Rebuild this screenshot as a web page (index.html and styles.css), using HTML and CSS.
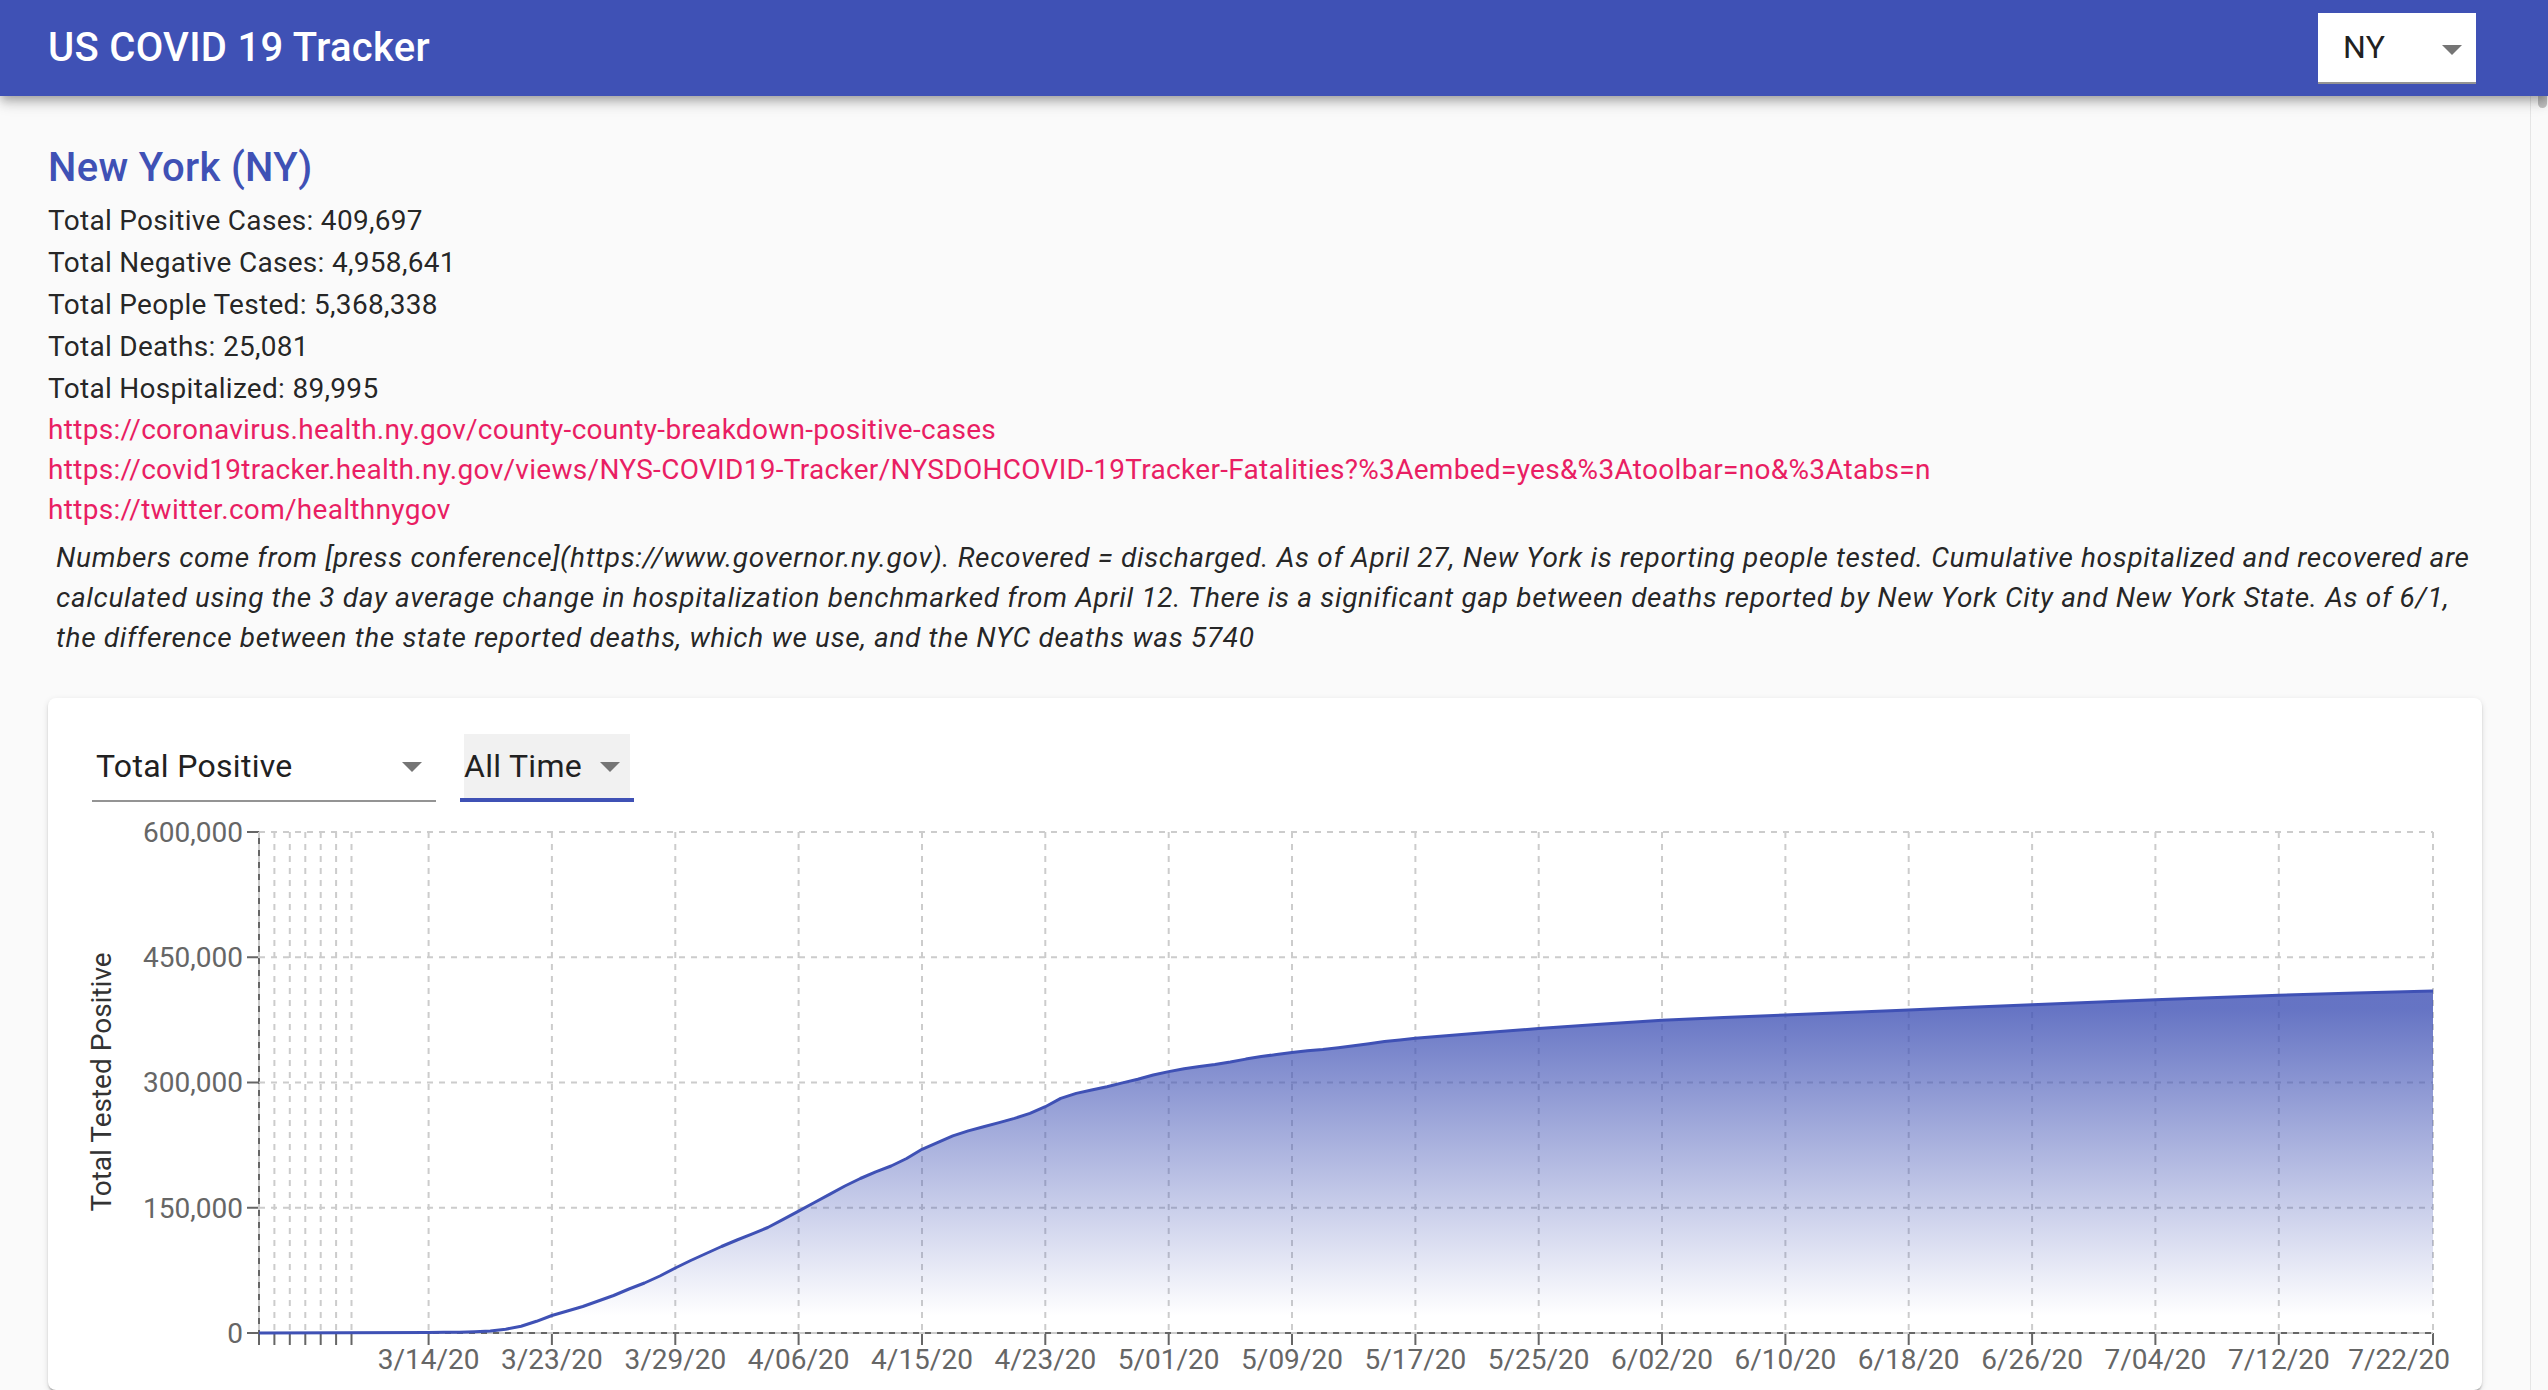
FILE: index.html
```html
<!DOCTYPE html>
<html lang="en">
<head>
<meta charset="utf-8">
<title>US COVID 19 Tracker</title>
<link rel="stylesheet" href="styles.css">
</head>
<body>
<div class="app">
  <header class="appbar">
    <h1 class="app-title">US COVID 19 Tracker</h1>
    <div class="state-select">
      <span class="state-value">NY</span>
      <svg class="drop-arrow" viewBox="0 0 20 10"><path d="M0 0h20L10 10z"/></svg>
    </div>
  </header>
  <div class="viewport">
    <main class="content">
      <h2 class="state-name">New York (NY)</h2>
      <div class="stats">
        <p class="stat">Total Positive Cases: 409,697</p>
        <p class="stat">Total Negative Cases: 4,958,641</p>
        <p class="stat">Total People Tested: 5,368,338</p>
        <p class="stat">Total Deaths: 25,081</p>
        <p class="stat">Total Hospitalized: 89,995</p>
      </div>
      <div class="links">
        <a class="source-link" href="#">https://coronavirus.health.ny.gov/county-county-breakdown-positive-cases</a>
        <a class="source-link" href="#">https://covid19tracker.health.ny.gov/views/NYS-COVID19-Tracker/NYSDOHCOVID-19Tracker-Fatalities?%3Aembed=yes&amp;%3Atoolbar=no&amp;%3Atabs=n</a>
        <a class="source-link" href="#">https://twitter.com/healthnygov</a>
      </div>
      <p class="notes">Numbers come from [press conference](https://www.governor.ny.gov). Recovered = discharged. As of April 27, New York is reporting people tested. Cumulative hospitalized and recovered are calculated using the 3 day average change in hospitalization benchmarked from April 12. There is a significant gap between deaths reported by New York City and New York State. As of 6/1, the difference between the state reported deaths, which we use, and the NYC deaths was 5740</p>

      <section class="chart-card">
        <div class="chart-controls">
          <div class="select select-metric">
            <div class="select-field"><span>Total Positive</span></div>
            <svg class="drop-arrow" viewBox="0 0 20 10"><path d="M0 0h20L10 10z"/></svg>
          </div>
          <div class="select select-range is-focused">
            <div class="select-field"><span>All Time</span></div>
            <svg class="drop-arrow" viewBox="0 0 20 10"><path d="M0 0h20L10 10z"/></svg>
          </div>
        </div>

        <svg class="chart" width="2434" height="580" viewBox="48 810 2434 580">
          <defs>
            <linearGradient id="areaFill" x1="0" y1="0" x2="0" y2="1">
              <stop offset="5%" stop-color="#3f51b5" stop-opacity="0.8"/>
              <stop offset="95%" stop-color="#3f51b5" stop-opacity="0"/>
            </linearGradient>
          </defs>

          <g class="axis-lines">
            <path d="M259 832V1333M259 1333H2433"/>
          </g>
          <g class="axis-ticks">
            <path d="M247 832h12M247 957.25h12M247 1082.5h12M247 1207.75h12M247 1333h12"/>
            <path d="M259 1333v12M274.4 1333v12M289.8 1333v12M305.3 1333v12M320.7 1333v12M336.1 1333v12M351.5 1333v12M428.6 1333v12M551.9 1333v12M675.3 1333v12M798.6 1333v12M922 1333v12M1045.3 1333v12M1168.7 1333v12M1292 1333v12M1415.4 1333v12M1538.7 1333v12M1662 1333v12M1785.4 1333v12M1908.7 1333v12M2032.1 1333v12M2155.4 1333v12M2278.8 1333v12M2433 1333v12"/>
          </g>

          <g class="grid">
            <path d="M259 832H2433M259 957.25H2433M259 1082.5H2433M259 1207.75H2433M259 1333H2433"/>
            <path d="M259 832V1333M274.4 832V1333M289.8 832V1333M305.3 832V1333M320.7 832V1333M336.1 832V1333M351.5 832V1333M428.6 832V1333M551.9 832V1333M675.3 832V1333M798.6 832V1333M922 832V1333M1045.3 832V1333M1168.7 832V1333M1292 832V1333M1415.4 832V1333M1538.7 832V1333M1662 832V1333M1785.4 832V1333M1908.7 832V1333M2032.1 832V1333M2155.4 832V1333M2278.8 832V1333M2433 832V1333"/>
          </g>

          <polygon class="area" points="259,1333 428.6,1332.5 444,1332.3 459.4,1332.2 474.9,1331.7 490.3,1331 505.7,1329.2 521.1,1326.3 536.5,1321.3 551.9,1315.5 567.4,1311 582.8,1306.5 598.2,1301 613.6,1295.5 629,1289 644.5,1283 659.9,1276 675.3,1268 690.7,1260.5 706.1,1253.5 721.5,1246.5 737,1240 752.4,1233.8 767.8,1227.5 783.2,1219.4 798.6,1211.1 814,1202.7 829.5,1194.4 844.9,1186 860.3,1178.5 875.7,1171.8 891.1,1166 906.6,1158.5 922,1149.3 937.4,1142.6 952.8,1135.9 968.2,1130.9 983.6,1126.8 999.1,1122.6 1014.5,1118.4 1029.9,1113.4 1045.3,1106.7 1060.7,1098.4 1076.2,1093.4 1091.6,1090 1107,1086.7 1122.4,1082.9 1137.8,1079.2 1153.2,1075 1168.7,1071.6 1184.1,1068.7 1199.5,1066.6 1214.9,1064.5 1230.3,1062 1245.8,1059.1 1261.2,1056.6 1276.6,1054.5 1292,1052.4 1307.4,1050.8 1322.8,1049.5 1338.3,1047.8 1353.7,1045.8 1369.1,1043.7 1384.5,1041.6 1399.9,1039.9 1415.4,1038.3 1477,1033.2 1538.7,1028.6 1600.3,1024.2 1662,1020.3 1723.7,1017.5 1785.4,1014.9 1847,1012.4 1908.7,1009.9 1970.4,1007.3 2032.1,1004.8 2093.7,1002.3 2155.4,999.8 2217.1,997.5 2278.8,995.3 2355.9,993.1 2433,990.9 2433,1333"/>
          <polyline class="line" points="259,1333 428.6,1332.5 444,1332.3 459.4,1332.2 474.9,1331.7 490.3,1331 505.7,1329.2 521.1,1326.3 536.5,1321.3 551.9,1315.5 567.4,1311 582.8,1306.5 598.2,1301 613.6,1295.5 629,1289 644.5,1283 659.9,1276 675.3,1268 690.7,1260.5 706.1,1253.5 721.5,1246.5 737,1240 752.4,1233.8 767.8,1227.5 783.2,1219.4 798.6,1211.1 814,1202.7 829.5,1194.4 844.9,1186 860.3,1178.5 875.7,1171.8 891.1,1166 906.6,1158.5 922,1149.3 937.4,1142.6 952.8,1135.9 968.2,1130.9 983.6,1126.8 999.1,1122.6 1014.5,1118.4 1029.9,1113.4 1045.3,1106.7 1060.7,1098.4 1076.2,1093.4 1091.6,1090 1107,1086.7 1122.4,1082.9 1137.8,1079.2 1153.2,1075 1168.7,1071.6 1184.1,1068.7 1199.5,1066.6 1214.9,1064.5 1230.3,1062 1245.8,1059.1 1261.2,1056.6 1276.6,1054.5 1292,1052.4 1307.4,1050.8 1322.8,1049.5 1338.3,1047.8 1353.7,1045.8 1369.1,1043.7 1384.5,1041.6 1399.9,1039.9 1415.4,1038.3 1477,1033.2 1538.7,1028.6 1600.3,1024.2 1662,1020.3 1723.7,1017.5 1785.4,1014.9 1847,1012.4 1908.7,1009.9 1970.4,1007.3 2032.1,1004.8 2093.7,1002.3 2155.4,999.8 2217.1,997.5 2278.8,995.3 2355.9,993.1 2433,990.9"/>

          <g class="y-ticks">
            <text x="243" y="832" dy="0.355em">600,000</text>
            <text x="243" y="957.25" dy="0.355em">450,000</text>
            <text x="243" y="1082.5" dy="0.355em">300,000</text>
            <text x="243" y="1207.75" dy="0.355em">150,000</text>
            <text x="243" y="1333" dy="0.355em">0</text>
          </g>
          <g class="x-ticks">
            <text x="428.6" y="1349" dy="0.71em">3/14/20</text>
            <text x="551.9" y="1349" dy="0.71em">3/23/20</text>
            <text x="675.3" y="1349" dy="0.71em">3/29/20</text>
            <text x="798.6" y="1349" dy="0.71em">4/06/20</text>
            <text x="922" y="1349" dy="0.71em">4/15/20</text>
            <text x="1045.3" y="1349" dy="0.71em">4/23/20</text>
            <text x="1168.7" y="1349" dy="0.71em">5/01/20</text>
            <text x="1292" y="1349" dy="0.71em">5/09/20</text>
            <text x="1415.4" y="1349" dy="0.71em">5/17/20</text>
            <text x="1538.7" y="1349" dy="0.71em">5/25/20</text>
            <text x="1662" y="1349" dy="0.71em">6/02/20</text>
            <text x="1785.4" y="1349" dy="0.71em">6/10/20</text>
            <text x="1908.7" y="1349" dy="0.71em">6/18/20</text>
            <text x="2032.1" y="1349" dy="0.71em">6/26/20</text>
            <text x="2155.4" y="1349" dy="0.71em">7/04/20</text>
            <text x="2278.8" y="1349" dy="0.71em">7/12/20</text>
            <text class="last-tick" x="2450" y="1349" dy="0.71em">7/22/20</text>
          </g>
          <text class="y-label" x="101" y="1082" dy="0.355em" transform="rotate(-90 101 1082)">Total Tested Positive</text>
        </svg>
      </section>
    </main>
    <div class="scrollbar"><div class="scroll-thumb"></div></div>
  </div>
</div>
</body>
</html>
```

FILE: styles.css
```css
* {
  box-sizing: border-box;
}

html,
body {
  margin: 0;
  height: 100%;
  overflow: hidden;
}

body {
  background: #fafafa;
  font-family: Roboto, "Liberation Sans", Arial, sans-serif;
  color: rgba(0, 0, 0, 0.87);
}

.app {
  display: flex;
  flex-direction: column;
  height: 100vh;
}

/* ---------- App bar ---------- */
.appbar {
  position: relative;
  z-index: 2;
  flex: none;
  height: 96px;
  padding: 0 72px 0 48px;
  display: flex;
  align-items: center;
  justify-content: space-between;
  background: #3f51b5;
  color: #fff;
  box-shadow: 0 4px 8px -2px rgba(0, 0, 0, 0.2),
              0 8px 10px 0 rgba(0, 0, 0, 0.14),
              0 2px 20px 0 rgba(0, 0, 0, 0.12);
}

.app-title {
  margin: 0;
  font-size: 40px;
  font-weight: 500;
  line-height: 64px;
  letter-spacing: 0.0075em;
}

.state-select {
  position: relative;
  width: 158px;
  height: 71px;
  padding-left: 25px;
  display: flex;
  align-items: center;
  background: #fff;
  border-bottom: 2px solid #949494;
  color: #212121;
  font-size: 32px;
  letter-spacing: 0.3px;
}

.drop-arrow {
  position: absolute;
  right: 14px;
  top: calc(50% - 2.5px);
  width: 20px;
  height: 10px;
  fill: #757575;
}

/* ---------- Layout ---------- */
.viewport {
  flex: 1;
  min-height: 0;
  display: flex;
}

.content {
  flex: 1;
  min-width: 0;
  padding: 40px 48px 0;
  overflow: hidden;
}

.scrollbar {
  flex: none;
  width: 18px;
  padding: 0 1px 0 7px;
  background: #fafafa;
  border-left: 1px solid #e6e6e6;
}

.scroll-thumb {
  width: 9px;
  height: 12px;
  border-radius: 0 0 5px 5px;
  background: #c1c1c1;
}

/* ---------- State summary ---------- */
.state-name {
  margin: 0;
  font-size: 40px;
  font-weight: 500;
  line-height: 64px;
  letter-spacing: 0.0075em;
  color: #3f51b5;
}

.stat {
  margin: 0;
  font-size: 28px;
  line-height: 42px;
  letter-spacing: 0.3px;
}

.links {
  display: flex;
  flex-direction: column;
  align-items: flex-start;
}

.source-link {
  font-size: 28px;
  line-height: 40px;
  letter-spacing: 0.3px;
  color: #e91e63;
  text-decoration: none;
}

.notes {
  margin: 0;
  padding: 8px;
  font-size: 28px;
  font-style: italic;
  line-height: 40px;
  letter-spacing: 0.66px;
}

/* ---------- Chart card ---------- */
.chart-card {
  margin-top: 32px;
  background: #fff;
  border-radius: 8px;
  box-shadow: 0 4px 2px -2px rgba(0, 0, 0, 0.2),
              0 2px 2px 0 rgba(0, 0, 0, 0.14),
              0 2px 6px 0 rgba(0, 0, 0, 0.12);
}

.chart-controls {
  display: flex;
  gap: 24px;
  padding: 36px 0 0 44px;
}

.select {
  position: relative;
  height: 68px;
  font-size: 32px;
  letter-spacing: 0.3px;
  color: #212121;
}

.select .drop-arrow {
  top: 28px;
}

.select-metric {
  width: 344px;
  border-bottom: 2px solid #949494;
}

.select-range {
  width: 174px;
  border-bottom: 4px solid #3f51b5;
}

.select-field {
  height: 64px;
  margin: 0 4px;
  display: flex;
  align-items: center;
}

.is-focused .select-field {
  background: rgba(0, 0, 0, 0.055);
}

.chart {
  display: block;
  margin-top: 8px;
  font-family: Roboto, "Liberation Sans", Arial, sans-serif;
}

.axis-lines path,
.axis-ticks path {
  fill: none;
  stroke: #666;
  stroke-width: 2;
}

.grid path {
  fill: none;
  stroke: #ccc;
  stroke-width: 2;
  stroke-dasharray: 6 6;
}

.area {
  fill: url(#areaFill);
}

.line {
  fill: none;
  stroke: #3f51b5;
  stroke-width: 3;
  stroke-linejoin: round;
}

.y-ticks text {
  font-size: 28px;
  fill: #666;
  text-anchor: end;
}

.x-ticks text {
  font-size: 28px;
  fill: #666;
  text-anchor: middle;
}

.x-ticks .last-tick {
  text-anchor: end;
}

.y-label {
  font-size: 28px;
  fill: #333;
  text-anchor: middle;
}
```
